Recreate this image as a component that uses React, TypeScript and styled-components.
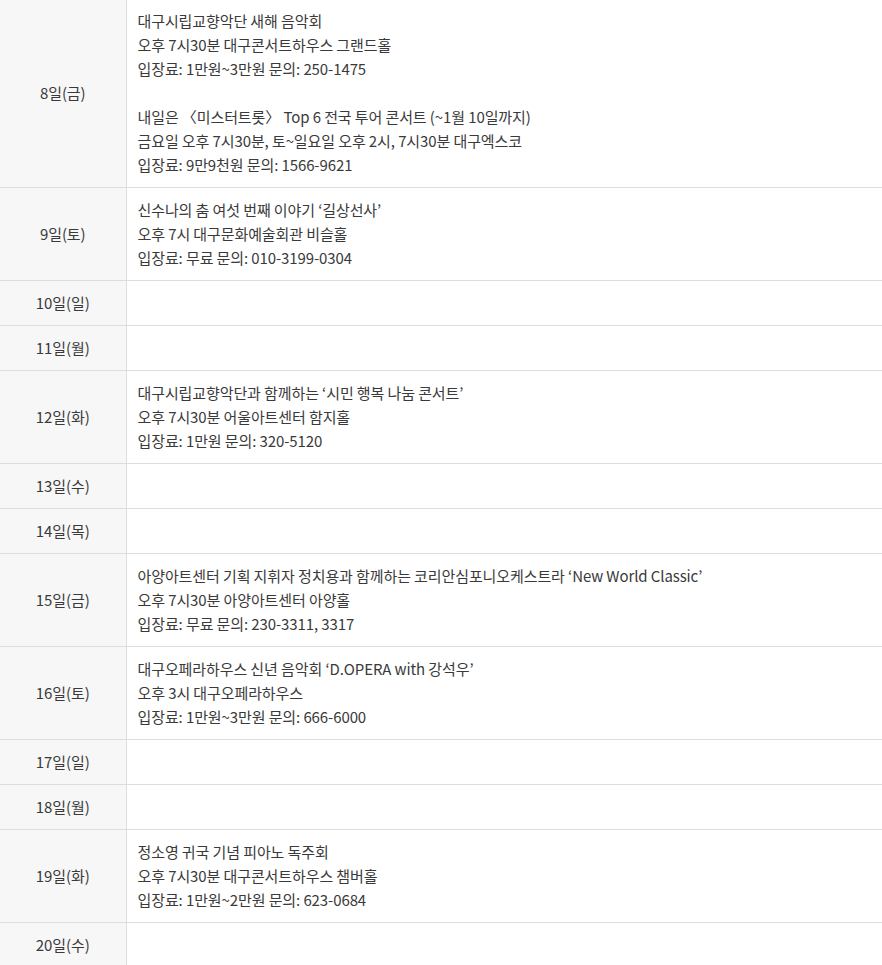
import { createGlobalStyle, styled } from 'styled-components';

interface ScheduleRow {
  day: string;
  events: string[][];
}

const rows: ScheduleRow[] = [
  {
    day: '8일(금)',
    events: [
      ['대구시립교향악단 새해 음악회', '오후 7시30분 대구콘서트하우스 그랜드홀', '입장료: 1만원~3만원 문의: 250-1475'],
      [
        '내일은 〈미스터트롯〉 Top 6 전국 투어 콘서트 (~1월 10일까지)',
        '금요일 오후 7시30분, 토~일요일 오후 2시, 7시30분 대구엑스코',
        '입장료: 9만9천원 문의: 1566-9621',
      ],
    ],
  },
  {
    day: '9일(토)',
    events: [['신수나의 춤 여섯 번째 이야기 ‘길상선사’', '오후 7시 대구문화예술회관 비슬홀', '입장료: 무료 문의: 010-3199-0304']],
  },
  { day: '10일(일)', events: [] },
  { day: '11일(월)', events: [] },
  {
    day: '12일(화)',
    events: [['대구시립교향악단과 함께하는 ‘시민 행복 나눔 콘서트’', '오후 7시30분 어울아트센터 함지홀', '입장료: 1만원 문의: 320-5120']],
  },
  { day: '13일(수)', events: [] },
  { day: '14일(목)', events: [] },
  {
    day: '15일(금)',
    events: [
      [
        '아양아트센터 기획 지휘자 정치용과 함께하는 코리안심포니오케스트라 ‘New World Classic’',
        '오후 7시30분 아양아트센터 아양홀',
        '입장료: 무료 문의: 230-3311, 3317',
      ],
    ],
  },
  {
    day: '16일(토)',
    events: [['대구오페라하우스 신년 음악회 ‘D.OPERA with 강석우’', '오후 3시 대구오페라하우스', '입장료: 1만원~3만원 문의: 666-6000']],
  },
  { day: '17일(일)', events: [] },
  { day: '18일(월)', events: [] },
  {
    day: '19일(화)',
    events: [['정소영 귀국 기념 피아노 독주회', '오후 7시30분 대구콘서트하우스 챔버홀', '입장료: 1만원~2만원 문의: 623-0684']],
  },
  { day: '20일(수)', events: [] },
];

const App = () => {
  return (
    <>
      <GlobalStyle />
      <S.Wrap>
        <S.Table>
          <colgroup>
            <col width={126} />
            <col />
          </colgroup>
          <tbody>
            {rows.map((row) => (
              <tr key={row.day}>
                <S.DayCell>{row.day}</S.DayCell>
                <S.InfoCell>
                  {row.events.map((lines, i) => (
                    <S.Event key={i} $gap={i > 0}>
                      {lines.map((line) => (
                        <S.Line key={line}>{line}</S.Line>
                      ))}
                    </S.Event>
                  ))}
                </S.InfoCell>
              </tr>
            ))}
          </tbody>
        </S.Table>
      </S.Wrap>
    </>
  );
};

const GlobalStyle = createGlobalStyle`
  body {
    margin: 0;
    background: #fff;
    font-family: 'Noto Sans CJK KR', 'Noto Sans', sans-serif;
    color: #3a3a3a;
  }
`;

const S = {
  Wrap: styled.div`
    width: 882px;
    height: 965px;
    overflow: hidden;
  `,

  Table: styled.table`
    width: 100%;
    margin-top: -1px;
    border-collapse: collapse;
    table-layout: fixed;

    font-size: 15px;
    line-height: 24px;
    letter-spacing: -0.1px;
  `,

  DayCell: styled.td`
    padding: 10px 0;
    border-bottom: 1px solid #ddd;
    border-right: 1px solid #ddd;

    background-color: #f7f7f7;

    text-align: center;
    vertical-align: middle;
  `,

  InfoCell: styled.td`
    height: 24px;
    padding: 10px 0 10px 11px;
    border-bottom: 1px solid #ddd;

    vertical-align: middle;
  `,

  Event: styled.div<{ $gap?: boolean }>`
    margin-top: ${({ $gap }) => ($gap ? '24px' : '0')};
  `,

  Line: styled.p`
    margin: 0;
  `,
};

export default App;
